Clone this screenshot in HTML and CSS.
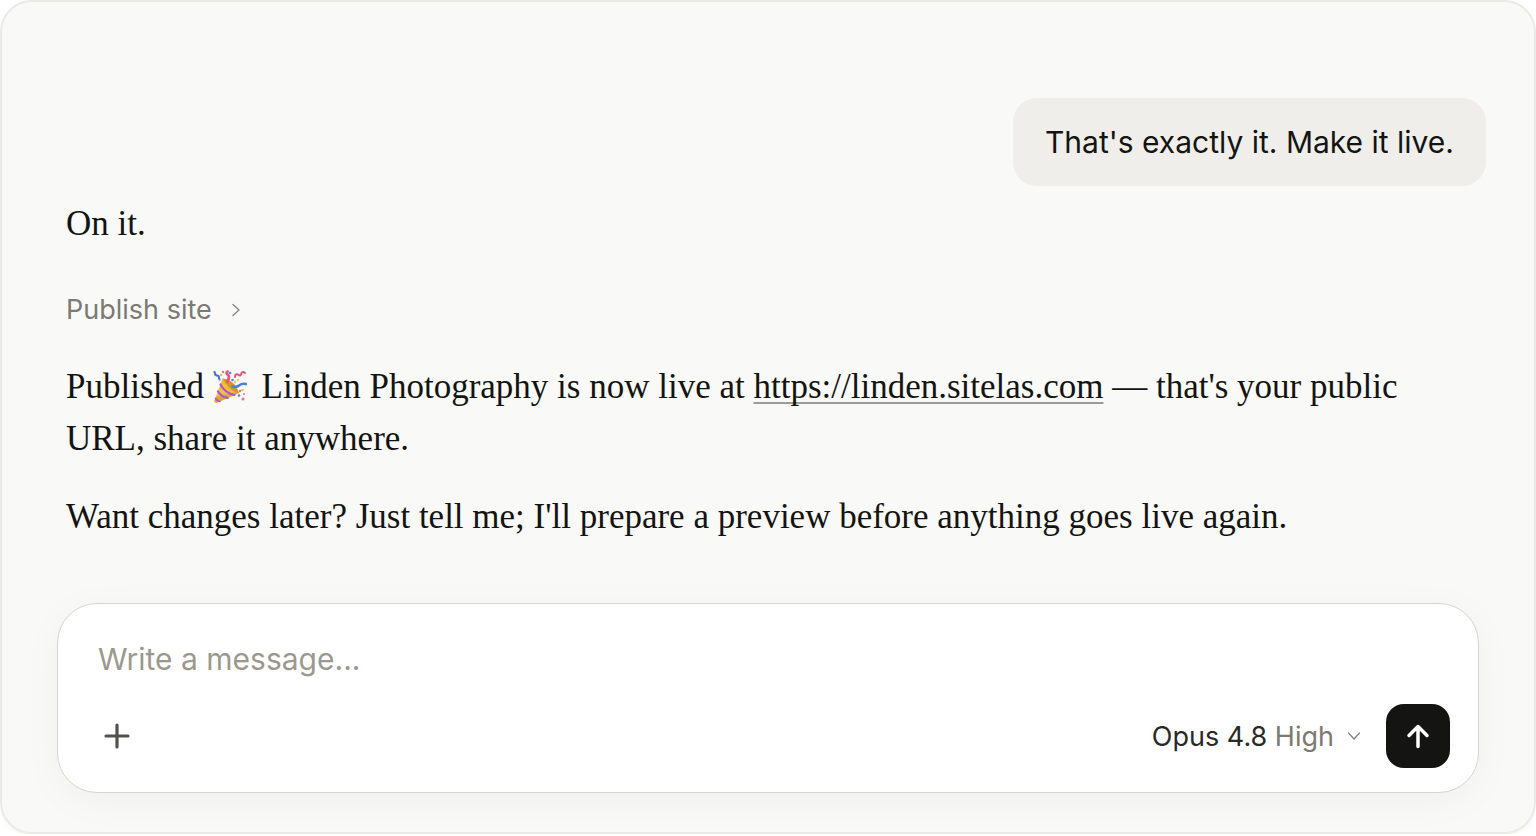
FILE: index.html
```html
<!DOCTYPE html>
<html lang="en">
<head>
  <meta charset="UTF-8">
  <meta name="viewport" content="width=device-width, initial-scale=1.0">
  <title>Chat</title>
  <link rel="stylesheet" href="styles.css">
</head>
<body>
  <main class="chat">
    <div class="messages">
      <div class="user-message">That's exactly it. Make it live.</div>

      <div class="reply">
        <p>On it.</p>
        <button type="button" class="tool-step">
          Publish site
          <svg class="chevron" viewBox="0 0 16 16" aria-hidden="true"><path d="M5 2.5L11 8L5 13.5"/></svg>
        </button>
        <p>Published <svg class="emoji" viewBox="0 0 34 34" role="img" aria-label="party popper">
          <path d="M9.500 8.500L1.500 30.500Q1.500 33.500 4.500 32.500L26 23Q20 11 9.500 8.500Z" fill="#f3bd3c"/>
          <path d="M3 27L1.500 30.500Q1.500 33.500 4.500 32.500L26 23L23.500 22Z" fill="#e3a32d"/>
          <path d="M9.500 8.500Q22 10 26 23Q17 22 9.500 8.500Z" fill="#d4952b"/>
          <path d="M7.500 14.500Q12 23 21.500 25" fill="none" stroke="#a259d9" stroke-width="2.200"/>
          <path d="M5 21.500Q8.500 27 14.800 28" fill="none" stroke="#a259d9" stroke-width="2.200"/>
          <path d="M2.500 28.500Q4 31 7 31.400" fill="none" stroke="#a259d9" stroke-width="1.500"/>
          <path d="M14.500 11.500Q17 7 15 5Q12.500 3 14.500 1.500" fill="none" stroke="#e9566f" stroke-width="2.800"/>
          <path d="M19.500 16.500Q24 17.500 26 15.500Q29 13 33 14" fill="none" stroke="#4b7fe0" stroke-width="2.600"/>
          <path d="M22 7Q22 3.500 25 4.500Q28 7 28.500 3Q29.500 1 32 3" fill="none" stroke="#e0537d" stroke-width="2"/>
          <path d="M1.500 2L2.500 5L5.500 6L6.500 9.500" fill="none" stroke="#4874df" stroke-width="2.200"/>
          <g fill="#4c83e5"><circle cx="17" cy="3" r="1.300"/><circle cx="19.500" cy="10" r="1.300"/><circle cx="26" cy="25.500" r="1.300"/></g>
          <g fill="#f2bd40"><circle cx="8" cy="5" r="1.200"/><circle cx="22" cy="12" r="1.200"/><circle cx="29.500" cy="20" r="1.300"/><circle cx="25" cy="10" r="1"/></g>
          <g fill="#ef6f8b"><circle cx="10" cy="2" r="1.200"/><circle cx="30" cy="29" r="1.500"/><circle cx="27" cy="21" r="1.200"/><circle cx="31" cy="24" r="1"/></g>
        </svg> Linden Photography is now live at <a href="https://linden.sitelas.com">https://linden.sitelas.com</a> — that's your public URL, share it anywhere.</p>
        <p>Want changes later? Just tell me; I'll prepare a preview before anything goes live again.</p>
      </div>
    </div>

    <form class="composer">
      <input type="text" class="message-input" aria-label="Message" placeholder="Write a message...">
      <div class="toolbar">
        <button type="button" class="add-button" aria-label="Add attachment">
          <svg viewBox="0 0 28 28" aria-hidden="true"><path d="M14 3V25M3 14H25"/></svg>
        </button>
        <div class="actions">
          <button type="button" class="model-button">
            <span>Opus 4.8 <span class="effort">High</span></span>
            <svg class="chevron" viewBox="0 0 16 16" aria-hidden="true"><path d="M2.500 5L8 11L13.500 5"/></svg>
          </button>
          <button type="submit" class="send-button" aria-label="Send message">
            <svg viewBox="0 0 28 28" aria-hidden="true"><path d="M14 24.500V5M5 13.500L14 4.500L23 13.500"/></svg>
          </button>
        </div>
      </div>
    </form>
  </main>
</body>
</html>
```

FILE: styles.css
```css
* {
    box-sizing: border-box;
}

body {
    margin: 0;
    background-color: #fff;
    color: #141412;
    font-family: Inter, "Liberation Sans", sans-serif;
}

button,
input {
    font-family: inherit;
    color: inherit;
    background: none;
    border: none;
    padding: 0;
}

button {
    cursor: pointer;
}

svg {
    fill: none;
    stroke-linecap: round;
    stroke-linejoin: round;
}

.chat {
    padding: 96px 48px 39px 56px;
    background-color: #f9f9f7;
    border: 2px solid #ebebe5;
    border-radius: 32px;
    box-shadow: 0 2px 4px rgba(0, 0, 0, 0.04);
}

.messages {
    display: flex;
    flex-direction: column;
    gap: 12px;
}

.user-message {
    align-self: flex-end;
    padding: 20px 32px;
    background-color: #f0eeea;
    border-radius: 24px;
    font-size: 30px;
    line-height: 48px;
}

.reply {
    display: flex;
    flex-direction: column;
    align-items: flex-start;
    gap: 26px;
    padding: 0 8px;
    font-family: Georgia, "Liberation Serif", serif;
    font-size: 35px;
    line-height: 52px;
}

.reply p {
    margin: 0;
}

.reply a {
    color: inherit;
    text-decoration: underline;
    text-decoration-color: #9b9b98;
    text-decoration-thickness: 2px;
    text-underline-offset: 4px;
    text-decoration-skip-ink: none;
}

.emoji {
    width: 34px;
    height: 34px;
    margin-right: 6px;
    vertical-align: -6px;
}

.tool-step {
    display: flex;
    align-items: center;
    gap: 16px;
    padding-top: 9px;
    color: #7b7a73;
    font-size: 27px;
    line-height: 50px;
}

.reply .tool-step {
    font-family: Inter, "Liberation Sans", sans-serif;
}

.chevron {
    width: 16px;
    height: 16px;
    stroke: #85847e;
    stroke-width: 1.3;
}

.composer {
    margin-top: 60px;
    margin-right: 7px;
    margin-left: -1px;
    padding: 31px 28px 24px 40px;
    background-color: #fff;
    border: 1px solid #d5d5d2;
    border-radius: 40px;
    box-shadow: 0 8px 40px rgba(0, 0, 0, 0.04);
}

.message-input {
    display: block;
    width: 100%;
    height: 48px;
    font-size: 30px;
    outline: none;
}

.message-input::placeholder {
    color: #9b998f;
    opacity: 1;
}

.toolbar {
    display: flex;
    align-items: center;
    justify-content: space-between;
    margin-top: 21px;
}

.add-button {
    display: flex;
    padding: 5px;
}

.add-button svg {
    width: 28px;
    height: 28px;
    stroke: #52514d;
    stroke-width: 3.2;
}

.actions {
    display: flex;
    align-items: center;
    gap: 24px;
}

.model-button {
    display: flex;
    align-items: center;
    gap: 12px;
    color: #292927;
    font-size: 27px;
}

.effort {
    color: #7b7a73;
}

.send-button {
    display: flex;
    align-items: center;
    justify-content: center;
    width: 64px;
    height: 64px;
    background-color: #141412;
    border-radius: 18px;
}

.send-button svg {
    width: 28px;
    height: 28px;
    stroke: #fff;
    stroke-width: 3.5;
}
```
